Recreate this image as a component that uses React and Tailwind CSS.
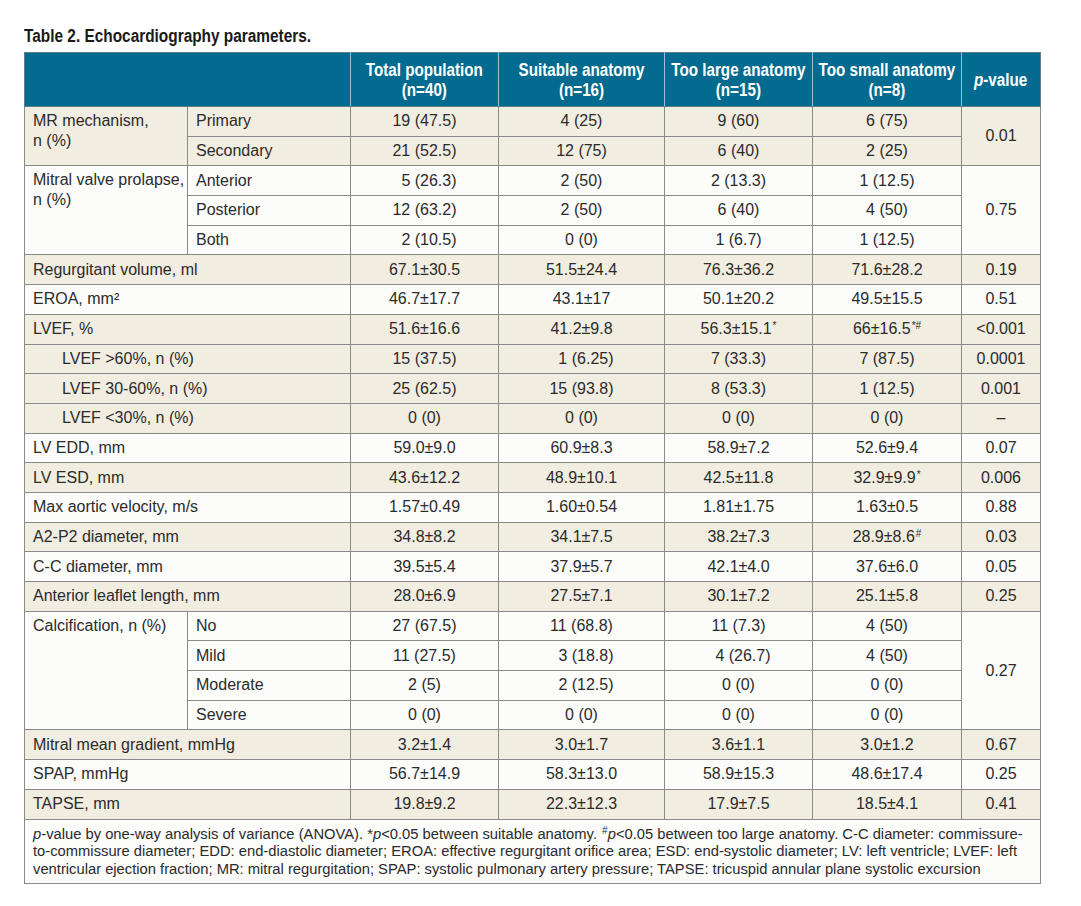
import React from "react";

const BEIGE = "bg-[#f1ede0]";
const WHITE = "bg-[#fcfcfb]";
const td = "border border-[#8a8a8a] px-2 text-center whitespace-nowrap";
const lab = "border border-[#8a8a8a] pl-2 pr-1 text-left whitespace-nowrap";
const hth = "border border-[#5d7f8c] border-x-[#9cc0d0] font-bold overflow-visible";

function Sup({ children }) {
  return <span className="text-[10px] leading-none align-[5px] ml-[1px]">{children}</span>;
}

function H({ children }) {
  return (
    <div className="flex justify-center">
      <span className="inline-block whitespace-nowrap text-center scale-x-[0.845]">{children}</span>
    </div>
  );
}

function SimpleRow({ bg, label, vals, indent }) {
  return (
    <tr className={`${bg} h-[29.7px]`}>
      <td colSpan={2} className={`${lab} ${indent ? "pl-[37px]" : ""}`}>{label}</td>
      {vals.map((v, i) => (
        <td key={i} className={td}>{v}</td>
      ))}
    </tr>
  );
}

export default function App() {
  return (
    <div
      className="bg-white w-[1081px] h-[906px] pl-6 pt-[26px] text-[#2b2b2b]"
      style={{ fontFamily: "'Liberation Sans', Arial, sans-serif" }}
    >
      <div className="text-[18px] font-bold leading-[20px] h-[26px] text-[#1a1a1a]">
        <span className="inline-block whitespace-nowrap origin-left scale-x-[0.855]">Table 2. Echocardiography parameters.</span>
      </div>
      <table className="border-collapse table-fixed w-[1016px] text-[16px] leading-[20px]">
        <colgroup>
          <col className="w-[163px]" />
          <col className="w-[163px]" />
          <col className="w-[148px]" />
          <col className="w-[166px]" />
          <col className="w-[148px]" />
          <col className="w-[149px]" />
          <col className="w-[79px]" />
        </colgroup>
        <thead>
          <tr className="bg-[#026b8f] text-white text-[18px] font-bold leading-[20px] h-[54px]">
            <th colSpan={2} className="border border-[#5d7f8c] border-r-[#9cc0d0]"></th>
            <th className={hth}><H>Total population<br />(n=40)</H></th>
            <th className={hth}><H>Suitable anatomy<br />(n=16)</H></th>
            <th className={hth}><H>Too large anatomy<br />(n=15)</H></th>
            <th className={hth}><H>Too small anatomy<br />(n=8)</H></th>
            <th className="border border-[#5d7f8c] border-l-[#9cc0d0] font-bold"><H><i>p</i>-value</H></th>
          </tr>
        </thead>
        <tbody>
          {/* MR mechanism */}
          <tr className={`${BEIGE} h-[29.7px]`}>
            <td rowSpan={2} className={`${lab} align-top pt-1 whitespace-normal`}>MR mechanism,<br />n (%)</td>
            <td className={lab}>Primary</td>
            <td className={td}>19 (47.5)</td>
            <td className={td}>4 (25)</td>
            <td className={td}>9 (60)</td>
            <td className={td}>6 (75)</td>
            <td rowSpan={2} className={td}>0.01</td>
          </tr>
          <tr className={`${BEIGE} h-[29.7px]`}>
            <td className={lab}>Secondary</td>
            <td className={td}>21 (52.5)</td>
            <td className={td}>12 (75)</td>
            <td className={td}>6 (40)</td>
            <td className={td}>2 (25)</td>
          </tr>
          {/* Mitral valve prolapse */}
          <tr className={`${WHITE} h-[29.7px]`}>
            <td rowSpan={3} className={`${lab} align-top pt-1`}>Mitral valve prolapse,<br />n (%)</td>
            <td className={lab}>Anterior</td>
            <td className={td}>{"\u2007"}5 (26.3)</td>
            <td className={td}>2 (50)</td>
            <td className={td}>2 (13.3)</td>
            <td className={td}>1 (12.5)</td>
            <td rowSpan={3} className={td}>0.75</td>
          </tr>
          <tr className={`${WHITE} h-[29.7px]`}>
            <td className={lab}>Posterior</td>
            <td className={td}>12 (63.2)</td>
            <td className={td}>2 (50)</td>
            <td className={td}>6 (40)</td>
            <td className={td}>4 (50)</td>
          </tr>
          <tr className={`${WHITE} h-[29.7px]`}>
            <td className={lab}>Both</td>
            <td className={td}>{"\u2007"}2 (10.5)</td>
            <td className={td}>0 (0)</td>
            <td className={td}>1 (6.7)</td>
            <td className={td}>1 (12.5)</td>
          </tr>
          <SimpleRow bg={BEIGE} label="Regurgitant volume, ml" vals={["67.1±30.5", "51.5±24.4", "76.3±36.2", "71.6±28.2", "0.19"]} />
          <SimpleRow bg={WHITE} label={<>EROA, mm²</>} vals={["46.7±17.7", "43.1±17", "50.1±20.2", "49.5±15.5", "0.51"]} />
          <SimpleRow
            bg={BEIGE}
            label="LVEF, %"
            vals={[
              "51.6±16.6",
              "41.2±9.8",
              <>56.3±15.1<Sup>*</Sup></>,
              <>66±16.5<Sup>*#</Sup></>,
              "<0.001",
            ]}
          />
          <SimpleRow bg={BEIGE} indent label="LVEF >60%, n (%)" vals={["15 (37.5)", "\u20071 (6.25)", "7 (33.3)", "7 (87.5)", "0.0001"]} />
          <SimpleRow bg={BEIGE} indent label="LVEF 30-60%, n (%)" vals={["25 (62.5)", "15 (93.8)", "8 (53.3)", "1 (12.5)", "0.001"]} />
          <SimpleRow bg={BEIGE} indent label="LVEF <30%, n (%)" vals={["0 (0)", "0 (0)", "0 (0)", "0 (0)", "–"]} />
          <SimpleRow bg={WHITE} label="LV EDD, mm" vals={["59.0±9.0", "60.9±8.3", "58.9±7.2", "52.6±9.4", "0.07"]} />
          <SimpleRow bg={BEIGE} label="LV ESD, mm" vals={["43.6±12.2", "48.9±10.1", "42.5±11.8", <>32.9±9.9<Sup>*</Sup></>, "0.006"]} />
          <SimpleRow bg={WHITE} label="Max aortic velocity, m/s" vals={["1.57±0.49", "1.60±0.54", "1.81±1.75", "1.63±0.5", "0.88"]} />
          <SimpleRow bg={BEIGE} label="A2-P2 diameter, mm" vals={["34.8±8.2", "34.1±7.5", "38.2±7.3", <>28.9±8.6<Sup>#</Sup></>, "0.03"]} />
          <SimpleRow bg={WHITE} label="C-C diameter, mm" vals={["39.5±5.4", "37.9±5.7", "42.1±4.0", "37.6±6.0", "0.05"]} />
          <SimpleRow bg={BEIGE} label="Anterior leaflet length, mm" vals={["28.0±6.9", "27.5±7.1", "30.1±7.2", "25.1±5.8", "0.25"]} />
          {/* Calcification */}
          <tr className={`${WHITE} h-[29.7px]`}>
            <td rowSpan={4} className={`${lab} align-top pt-1`}>Calcification, n (%)</td>
            <td className={lab}>No</td>
            <td className={td}>27 (67.5)</td>
            <td className={td}>11 (68.8)</td>
            <td className={td}>11 (7.3)</td>
            <td className={td}>4 (50)</td>
            <td rowSpan={4} className={td}>0.27</td>
          </tr>
          <tr className={`${WHITE} h-[29.7px]`}>
            <td className={lab}>Mild</td>
            <td className={td}>11 (27.5)</td>
            <td className={td}>{"\u2007"}3 (18.8)</td>
            <td className={td}>{"\u2007"}4 (26.7)</td>
            <td className={td}>4 (50)</td>
          </tr>
          <tr className={`${WHITE} h-[29.7px]`}>
            <td className={lab}>Moderate</td>
            <td className={td}>2 (5)</td>
            <td className={td}>{"\u2007"}2 (12.5)</td>
            <td className={td}>0 (0)</td>
            <td className={td}>0 (0)</td>
          </tr>
          <tr className={`${WHITE} h-[29.7px]`}>
            <td className={lab}>Severe</td>
            <td className={td}>0 (0)</td>
            <td className={td}>0 (0)</td>
            <td className={td}>0 (0)</td>
            <td className={td}>0 (0)</td>
          </tr>
          <SimpleRow bg={BEIGE} label="Mitral mean gradient, mmHg" vals={["3.2±1.4", "3.0±1.7", "3.6±1.1", "3.0±1.2", "0.67"]} />
          <SimpleRow bg={WHITE} label="SPAP, mmHg" vals={["56.7±14.9", "58.3±13.0", "58.9±15.3", "48.6±17.4", "0.25"]} />
          <SimpleRow bg={BEIGE} label="TAPSE, mm" vals={["19.8±9.2", "22.3±12.3", "17.9±7.5", "18.5±4.1", "0.41"]} />
          <tr className={WHITE}>
            <td colSpan={7} className="border border-[#8a8a8a] pl-2 pr-1 pt-[6px] pb-[5px] text-left text-[14.75px] leading-[17.5px] whitespace-nowrap">
              <div className="h-[17.5px]"><i>p</i>-value by one-way analysis of variance (ANOVA). *<i>p</i>&lt;0.05 between suitable anatomy. <Sup>#</Sup><i>p</i>&lt;0.05 between too large anatomy. C-C diameter: commissure-</div>
              <div className="h-[17.5px]">to-commissure diameter; EDD: end-diastolic diameter; EROA: effective regurgitant orifice area; ESD: end-systolic diameter; LV: left ventricle; LVEF: left</div>
              <div className="h-[17.5px]">ventricular ejection fraction; MR: mitral regurgitation; SPAP: systolic pulmonary artery pressure; TAPSE: tricuspid annular plane systolic excursion</div>
            </td>
          </tr>
        </tbody>
      </table>
    </div>
  );
}
